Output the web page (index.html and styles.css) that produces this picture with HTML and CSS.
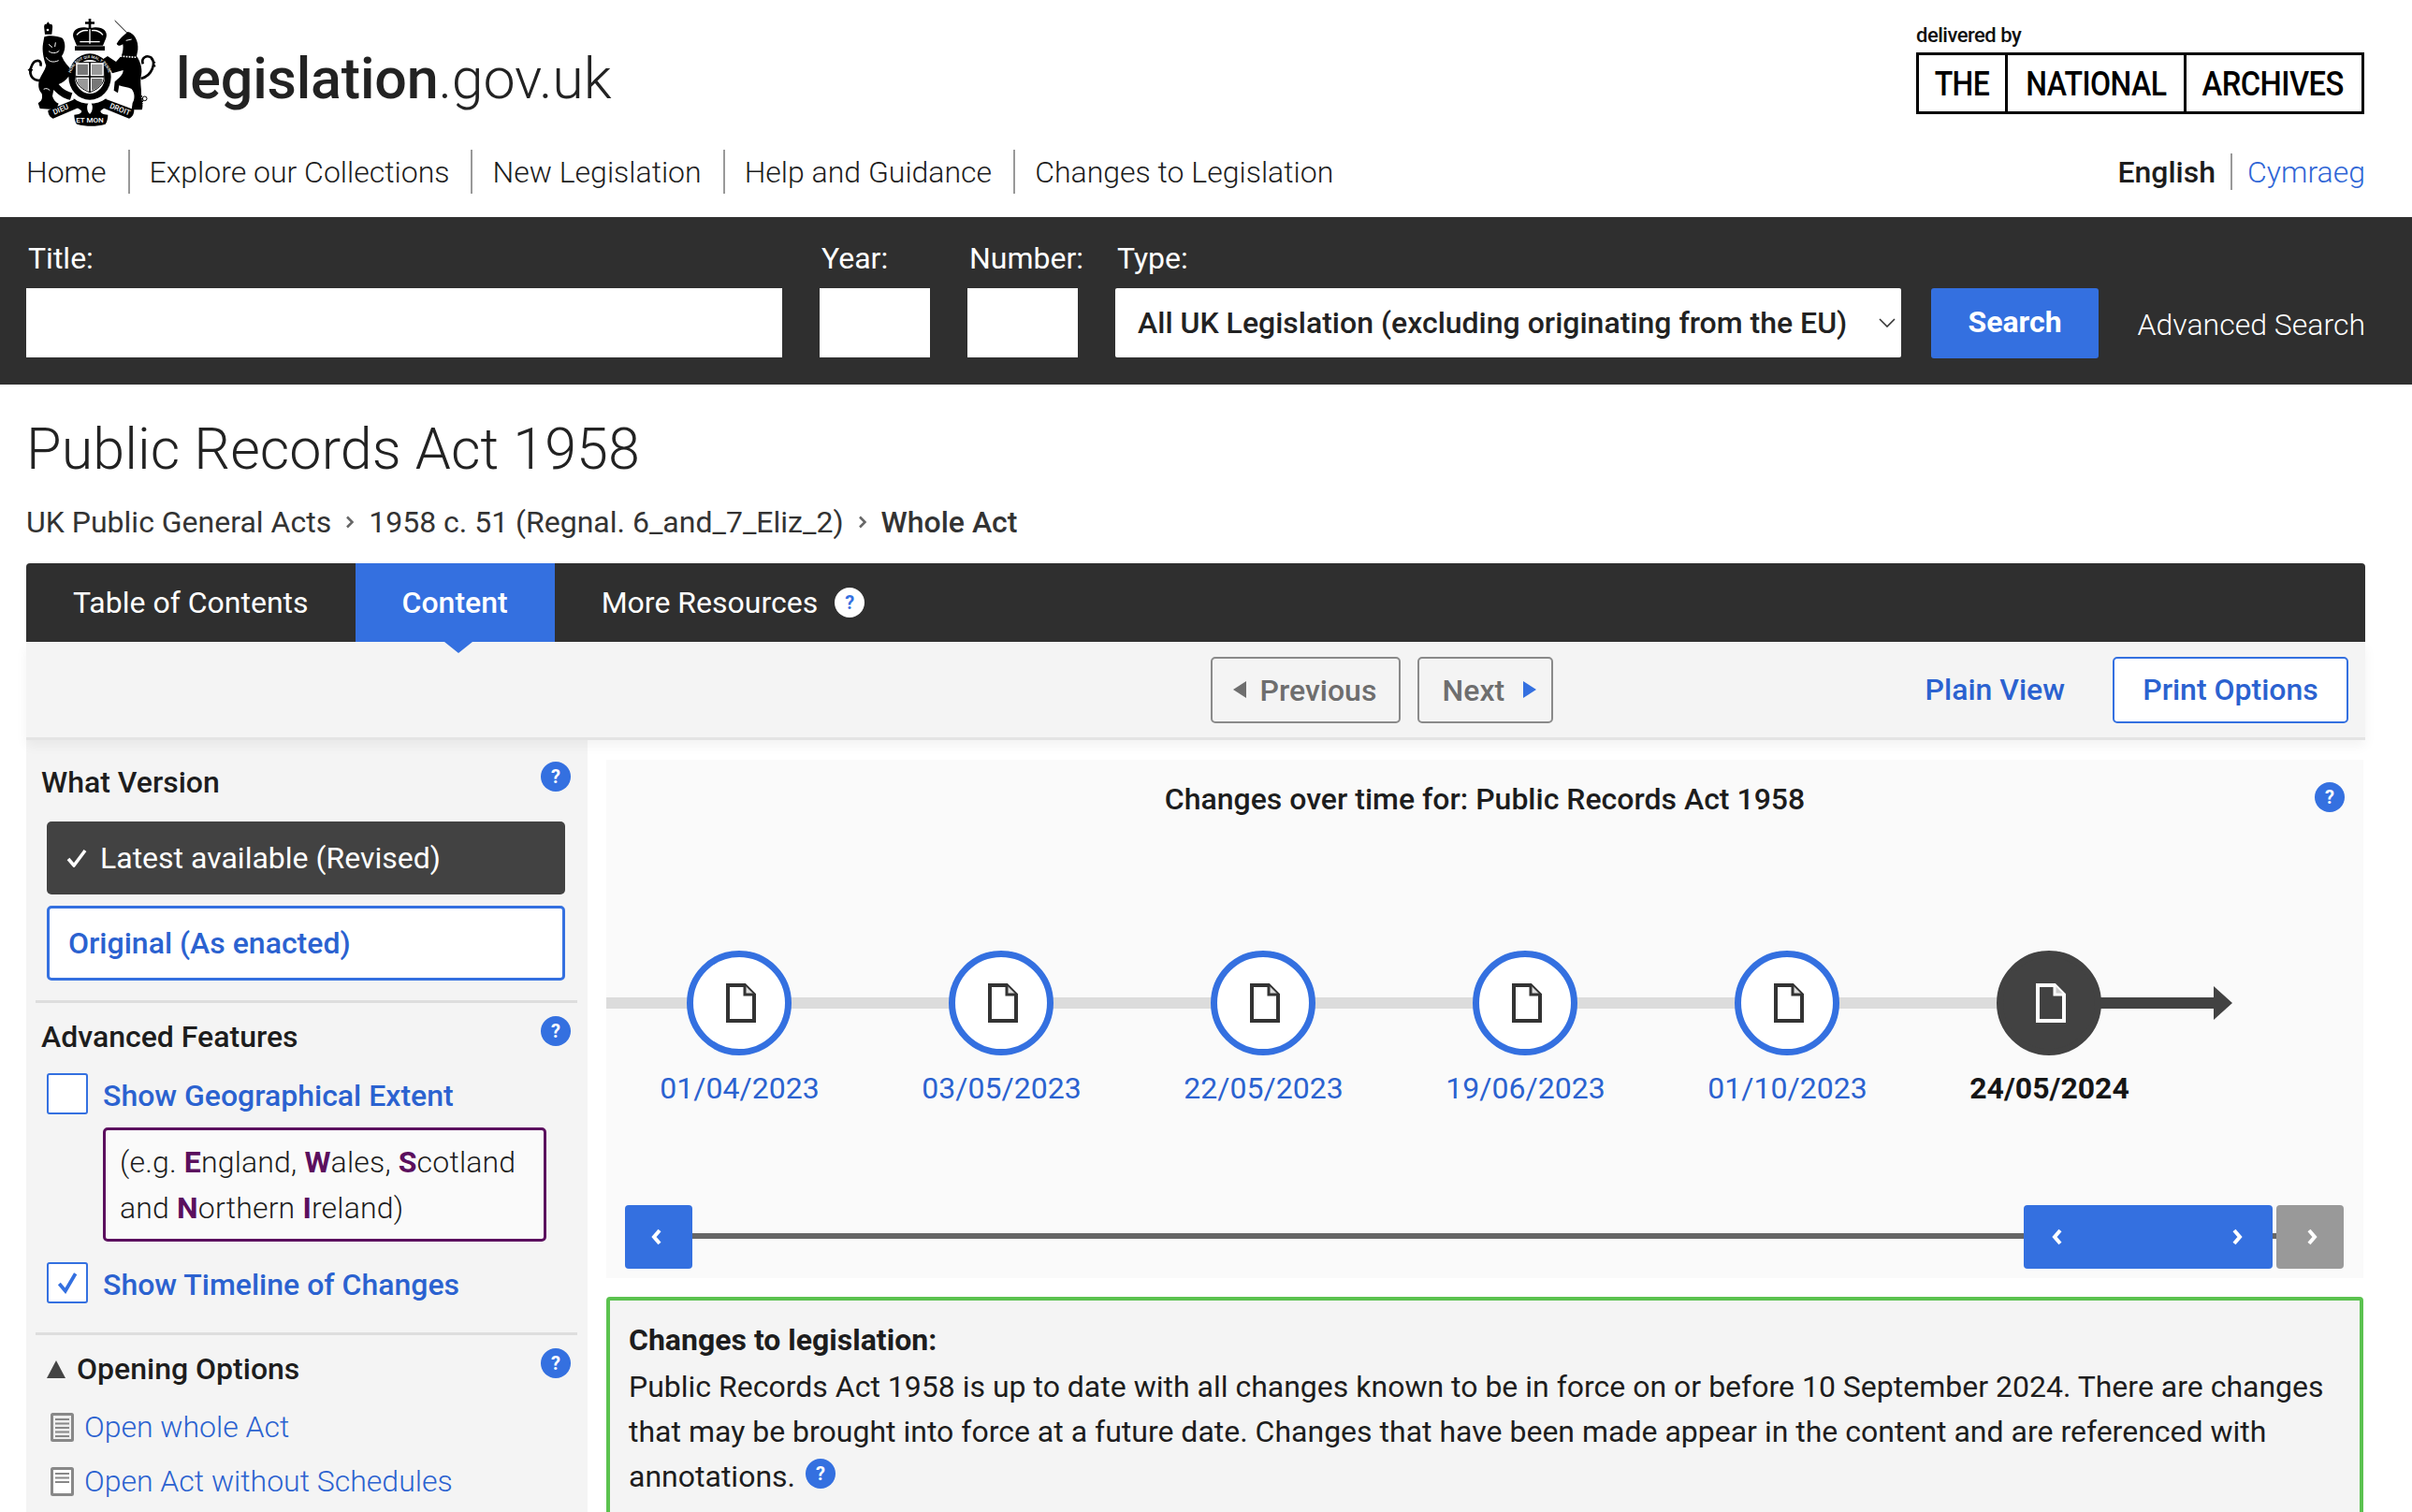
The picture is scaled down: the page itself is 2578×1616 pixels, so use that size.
FILE: index.html
```html
<!DOCTYPE html>
<html lang="en">
<head>
<meta charset="utf-8">
<title>Public Records Act 1958 - legislation.gov.uk</title>
<link rel="stylesheet" href="styles.css">
</head>
<body>
<header class="site-header">
  <div class="brand-row">
    <a class="brand" href="#">
      <svg class="crest" viewBox="0 0 480 390" aria-hidden="true">
        <defs>
          <path id="garter" d="M172 262C150 205 180 160 228 156C276 160 306 205 284 262"/>
        </defs>
        <g fill="#000">
          <path d="M224 30h8v10h11v7h-11v13h-8V47h-11v-7h11z"/>
          <path d="M176 92c-8-22 12-36 36-34 8 1 12 2 16 2s8-1 16-2c24-2 44 12 36 34l-10 24H186z"/>
          <path d="M180 118h96v14h-96z"/>
          <path d="M82 62c-2-12 2-16 6-14l6-8 6 8c6-2 10 2 8 14l-2 18H84z"/>
          <path d="M82 88c13-6 43-4 58 4 12 16 10 40-2 58 8 20 22 35 34 45l16-7 7 12-23 22-12-7c-10 13-20 21-32 25 8 10 22 22 44 28l-7 22c-20-2-40-18-53-32l-4 20c4 12 10 20 20 24l-8 20-52-4-6-18c10-4 16-14 12-30-8-8-14-22-8-44 6-16 18-30 22-46-8-20-14-50-10-70z"/>
          <path d="M350 72c20 4 35 28 32 58l-4 20c14 20 20 45 14 65-4 25 4 45 0 65 4 15 8 30 3 42h-33l3-22c7-10 9-30-3-45-12-7-27-5-40-11l-4 24-13-8 3-28c12-12 27-20 27-37l-35 10-15-25-15-20 15-10 27 18 18-20c4-13 6-23 4-36-8 6-16 6-20-2 8-14 21-26 36-38z"/>
          <path d="M176 286c30 22 74 22 104 0l6 24c-10 6-18 10-24 16 2 8 8 10 24 12 0 8-2 22-8 30-30 8-60 8-92 0-6-8-8-22-8-30 16-2 22-4 24-12-6-6-14-10-24-16z"/>
          <path d="M94 324l86-36 14 26-84 36c-10-4-16-14-16-26z"/>
          <path d="M280 288l90 34c0 14-6 24-16 28l-88-36z"/>
        </g>
        <g fill="none" stroke="#000">
          <path d="M72 228c-32 2-42-23-30-48 8-20 34-22 28 2" stroke-width="8"/>
          <path d="M42 186l-12 10M44 192l-8 14" stroke-width="4"/>
          <path d="M392 222c38-10 48-52 33-67-15-10-33 0-27 20" stroke-width="8"/>
          <path d="M424 160l14 12M430 170l8 14" stroke-width="4"/>
          <path d="M308 36l44 44" stroke-width="3"/>
          <path d="M362 252c24 8 36 26 34 50" stroke-width="6" stroke-dasharray="5 3"/>
          <circle cx="404" cy="286" r="7" stroke-width="3"/>
        </g>
        <g fill="none" stroke="#fff">
          <path d="M96 112l12 10M118 106l-2 14M96 134c10 8 26 8 34-2M88 154c8 14 22 18 40 10M80 256c8-4 14-2 20 4" stroke-width="3"/>
          <path d="M326 150l52 4" stroke-width="5" stroke-dasharray="5 4"/>
          <path d="M186 82c12-14 24-16 36-14M270 82c-12-14-24-16-36-14M228 64v46M196 104h64" stroke-width="4"/>
          <path d="M344 100l18-4" stroke-width="3"/>
        </g>
        <circle cx="93" cy="66" r="4" fill="#fff"/>
        <ellipse cx="228" cy="216" rx="68" ry="74" fill="#000"/>
        <ellipse cx="228" cy="216" rx="48" ry="54" fill="#fff"/>
        <path d="M182 170h92v46c0 26-24 42-46 50-22-8-46-24-46-50z" fill="#fff" stroke="#000" stroke-width="3"/>
        <path d="M228 170v96M182 216h92" stroke="#000" stroke-width="5"/>
        <g fill="#777">
          <path d="M188 176h34v34h-34zM234 222h34v6c0 14-14 26-34 32z"/>
          <path d="M234 176h34v34h-34zM188 222h34v38c-20-6-34-18-34-32z" opacity=".75"/>
        </g>
        <text class="crest-garter"><textPath href="#garter" startOffset="50%" text-anchor="middle">HONI SOIT QUI MAL Y PENSE</textPath></text>
        <path d="M228 296c12 8 10 28 2 38-1 2-3 2-4 0-8-10-10-30 2-38z" fill="#fff"/>
        <circle cx="203" cy="294" r="4" fill="#fff"/>
        <circle cx="253" cy="294" r="4" fill="#fff"/>
        <text class="crest-motto" x="138" y="328" transform="rotate(-23 138 328)" text-anchor="middle">DIEU</text>
        <text class="crest-motto" x="322" y="328" transform="rotate(21 322 328)" text-anchor="middle">DROIT</text>
        <text class="crest-motto" x="228" y="362" text-anchor="middle">ET MON</text>
      </svg>
      <span class="wordmark"><b>legislation</b>.gov.uk</span>
    </a>
    <div class="tna">
      <span class="tna-by">delivered by</span>
      <div class="tna-box"><span><em>THE</em></span><span><em>NATIONAL</em></span><span><em>ARCHIVES</em></span></div>
    </div>
  </div>
  <div class="nav-row">
    <nav class="nav">
      <a href="#">Home</a>
      <a href="#">Explore our Collections</a>
      <a href="#">New Legislation</a>
      <a href="#">Help and Guidance</a>
      <a href="#">Changes to Legislation</a>
    </nav>
    <div class="lang"><strong>English</strong><a href="#">Cymraeg</a></div>
  </div>
</header>

<form class="search">
  <label class="field field-title"><span>Title:</span><input type="text"></label>
  <label class="field field-num"><span>Year:</span><input type="text"></label>
  <label class="field field-num"><span>Number:</span><input type="text"></label>
  <label class="field field-type"><span>Type:</span>
    <span class="select-wrap">
      <select><option>All UK Legislation (excluding originating from the EU)</option></select>
      <svg class="select-chevron" viewBox="0 0 18 10"><path d="M1 1l8 8 8-8" fill="none" stroke="#333" stroke-width="1.6"/></svg>
    </span>
  </label>
  <button class="search-btn" type="button">Search</button>
  <a class="adv" href="#">Advanced Search</a>
</form>

<main class="page">
  <h1>Public Records Act 1958</h1>
  <div class="crumbs">
    <a href="#">UK Public General Acts</a>
    <svg class="crumb-sep" viewBox="0 0 10 14"><path d="M2 1.500l5.500 5.500-5.500 5.500" fill="none" stroke="#666" stroke-width="2.500"/></svg>
    <a href="#">1958 c. 51 (Regnal. 6_and_7_Eliz_2)</a>
    <svg class="crumb-sep" viewBox="0 0 10 14"><path d="M2 1.500l5.500 5.500-5.500 5.500" fill="none" stroke="#666" stroke-width="2.500"/></svg>
    <strong>Whole Act</strong>
  </div>

  <div class="tabs">
    <a class="tab" href="#">Table of Contents</a>
    <a class="tab tab-active" href="#">Content</a>
    <a class="tab tab-more" href="#">More Resources <i class="help help-white">?</i></a>
  </div>

  <div class="toolbar">
    <a class="pager pager-prev" href="#"><i class="tri tri-left"></i>Previous</a>
    <a class="pager pager-next" href="#">Next<i class="tri tri-right"></i></a>
    <a class="plain" href="#">Plain View</a>
    <a class="print" href="#">Print Options</a>
  </div>

  <div class="columns">
    <aside class="side">
      <section class="side-sec sec-version">
        <div class="side-head"><h2>What Version</h2><i class="help">?</i></div>
        <a class="ver ver-on" href="#"><svg class="tick" viewBox="0 0 22 20"><path d="M2 11l6 7L20 2" fill="none" stroke="#fff" stroke-width="3.500"/></svg>Latest available (Revised)</a>
        <a class="ver ver-off" href="#">Original (As enacted)</a>
      </section>
      <section class="side-sec sec-adv">
        <div class="side-head"><h2>Advanced Features</h2><i class="help">?</i></div>
        <a class="check-row" href="#"><span class="box"></span><span class="check-label">Show Geographical Extent</span></a>
        <p class="geo">(e.g. <b>E</b>ngland, <b>W</b>ales, <b>S</b>cotland and <b>N</b>orthern <b>I</b>reland)</p>
        <a class="check-row" href="#"><span class="box"><svg viewBox="0 0 24 24"><path d="M4 13l6 7L20 3" fill="none" stroke="#3470e0" stroke-width="3.500"/></svg></span><span class="check-label">Show Timeline of Changes</span></a>
      </section>
      <section class="side-sec sec-open">
        <div class="side-head"><h2 class="has-tri"><i class="tri-up"></i>Opening Options</h2><i class="help">?</i></div>
        <a class="open-link" href="#">
          <svg class="pdoc" viewBox="0 0 25 31"><rect x="1.500" y="1.500" width="22" height="28" rx="1" fill="#eee" stroke="#888" stroke-width="3"/><path d="M5 7h15M5 11.500h15M5 16h15M5 20.500h15M5 25h15" stroke="#888" stroke-width="2.200"/></svg>
          Open whole Act</a>
        <a class="open-link" href="#">
          <svg class="pdoc" viewBox="0 0 25 31"><rect x="1.500" y="1.500" width="22" height="28" rx="1" fill="#fff" stroke="#888" stroke-width="3"/><path d="M5 7h15M5 11.500h15M5 16h15" stroke="#888" stroke-width="2.200"/></svg>
          Open Act without Schedules</a>
      </section>
    </aside>

    <div class="content">
      <section class="timeline">
        <div class="tl-head"><h2>Changes over time for: Public Records Act 1958</h2><i class="help">?</i></div>
        <div class="tl-stage">
          <span class="tl-line"></span>
          <span class="tl-arrow"></span>
          <a class="node" href="#"><span class="dot"><svg class="doc" viewBox="0 0 32 42"><path d="M2 2h18l10 10v28H2z" fill="#fff" stroke="#333" stroke-width="4"/><path d="M20 2v10h10" fill="#ddd" stroke="#333" stroke-width="3"/></svg></span><span class="date">01/04/2023</span></a>
          <a class="node" href="#"><span class="dot"><svg class="doc" viewBox="0 0 32 42"><path d="M2 2h18l10 10v28H2z" fill="#fff" stroke="#333" stroke-width="4"/><path d="M20 2v10h10" fill="#ddd" stroke="#333" stroke-width="3"/></svg></span><span class="date">03/05/2023</span></a>
          <a class="node" href="#"><span class="dot"><svg class="doc" viewBox="0 0 32 42"><path d="M2 2h18l10 10v28H2z" fill="#fff" stroke="#333" stroke-width="4"/><path d="M20 2v10h10" fill="#ddd" stroke="#333" stroke-width="3"/></svg></span><span class="date">22/05/2023</span></a>
          <a class="node" href="#"><span class="dot"><svg class="doc" viewBox="0 0 32 42"><path d="M2 2h18l10 10v28H2z" fill="#fff" stroke="#333" stroke-width="4"/><path d="M20 2v10h10" fill="#ddd" stroke="#333" stroke-width="3"/></svg></span><span class="date">19/06/2023</span></a>
          <a class="node" href="#"><span class="dot"><svg class="doc" viewBox="0 0 32 42"><path d="M2 2h18l10 10v28H2z" fill="#fff" stroke="#333" stroke-width="4"/><path d="M20 2v10h10" fill="#ddd" stroke="#333" stroke-width="3"/></svg></span><span class="date">01/10/2023</span></a>
          <a class="node node-on" href="#"><span class="dot"><svg class="doc" viewBox="0 0 32 42"><path d="M2 2h18l10 10v28H2z" fill="#424242" stroke="#fff" stroke-width="4"/><path d="M20 2v10h10" fill="#ccc" stroke="#fff" stroke-width="3"/></svg></span><span class="date">24/05/2024</span></a>
        </div>
        <div class="slider">
          <a class="sl-btn sl-left" href="#"><svg class="chev" viewBox="0 0 12 18"><path d="M9 2L3 9l6 7" /></svg></a>
          <a class="sl-btn sl-range" href="#"><svg class="chev" viewBox="0 0 12 18"><path d="M9 2L3 9l6 7"/></svg><svg class="chev" viewBox="0 0 12 18"><path d="M3 2l6 7-6 7"/></svg></a>
          <a class="sl-btn sl-right" href="#"><svg class="chev" viewBox="0 0 12 18"><path d="M3 2l6 7-6 7"/></svg></a>
        </div>
      </section>
      <section class="notice">
        <h3>Changes to legislation:</h3>
        <p>Public Records Act 1958 is up to date with all changes known to be in force on or before 10 September 2024. There are changes that may be brought into force at a future date. Changes that have been made appear in the content and are referenced with annotations. <i class="help help-inline">?</i></p>
      </section>
    </div>
  </div>
</main>
</body>
</html>
```
FILE: styles.css
```css
* { box-sizing: border-box; }
html, body { margin: 0; height: 1616px; overflow: hidden; }
body { background: #fff; color: #1d1d1d; font-family: Roboto, "Noto Sans", sans-serif; font-size: 32px; font-weight: 300; }
a { color: inherit; text-decoration: none; }
h1, h2, h3, p { margin: 0; }
i, em { font-style: normal; }

.site-header { height: 232px; padding: 0 50px 0 28px; }
.brand-row { height: 160px; display: flex; justify-content: space-between; }
.brand { display: flex; align-items: flex-start; gap: 8px; padding-top: 10px; margin-left: -8px; }
.crest { width: 160px; height: 130px; display: block; flex: none; }
.crest-motto { font-family: Roboto, sans-serif; font-size: 24px; font-weight: 500; fill: #fff; }
.crest-garter { font-family: Roboto, sans-serif; font-size: 12.500px; font-weight: 500; fill: #fff; }
.wordmark { font-size: 61px; line-height: 80px; font-weight: 300; letter-spacing: -.2px; color: #222; margin-top: 34px; }
.wordmark b { font-weight: 500; }

.tna { width: 480px; padding: 24px 1px 0 0; display: flex; flex-direction: column; }
.tna-by { font-size: 22px; line-height: 28px; height: 32px; font-weight: 500; letter-spacing: -.5px; color: #111; }
.tna-box { display: flex; height: 66px; border: 3px solid #000; }
.tna-box span { display: flex; align-items: center; justify-content: center; border-left: 3px solid #000; padding-top: 2px; overflow: hidden; }
.tna-box em { font-size: 36px; font-weight: 500; color: #000; letter-spacing: -.6px; transform: scaleX(.89); display: block; white-space: nowrap; }
.tna-box span:nth-child(1) { width: 92px; border-left: 0; }
.tna-box span:nth-child(2) { width: 191px; }
.tna-box span:nth-child(3) { flex: 1; padding-right: 3px; }
.tna-box span:nth-child(3) em { transform: scaleX(.91); }

.nav-row { display: flex; justify-content: space-between; }
.nav { display: flex; }
.nav a { height: 47px; line-height: 48px; padding: 0 23px 0 21px; border-left: 2px solid #999; white-space: nowrap; }
.nav a:first-child { padding-left: 0; border-left: 0; }
.lang { display: flex; }
.lang strong { font-weight: 500; line-height: 48px; padding-right: 16px; }
.lang a { line-height: 41px; height: 39px; padding-left: 16px; border-left: 2px solid #999; color: #2f66d6; margin-top: 4px; }

.search { height: 179px; background: #2f2f2f; color: #fff; display: flex; padding: 0 50px 0 28px; align-items: flex-start; }
.field { display: flex; flex-direction: column; margin-right: 40px; }
.field > span:first-child { height: 76px; padding: 24px 0 0 2px; line-height: 40px; font-weight: 400; }
.field input { height: 74px; border: 0; display: block; width: 100%; background: #fff; }
.field-title { width: 808px; }
.field-num { width: 118px; }
.field-type { width: 840px; margin-right: 32px; }
.select-wrap { position: relative; display: block; }
.select-wrap select { appearance: none; -webkit-appearance: none; width: 100%; height: 74px; border: 0; border-radius: 2px; background: #fff; color: #222; font: 500 32px Roboto, sans-serif; padding: 0 0 0 24px; }
.select-chevron { position: absolute; right: 6px; top: 32px; width: 18px; height: 10px; }
.search-btn { margin-top: 76px; width: 179px; height: 75px; padding-bottom: 5px; background: #3470e0; color: #fff; border: 0; border-radius: 3px; font: 700 32px Roboto, sans-serif; }
.adv { margin: 76px 0 0 auto; line-height: 78px; font-weight: 300; white-space: nowrap; }

.page { padding: 0 50px 0 28px; }
h1 { font-size: 61px; line-height: 80px; font-weight: 300; padding-top: 29px; height: 123px; letter-spacing: .1px; color: #222; }
.crumbs { height: 68px; display: flex; align-items: center; gap: 15px; font-weight: 400; color: #333; padding-bottom: 20px; }
.crumbs strong { font-weight: 500; }
.crumb-sep { width: 10px; height: 14px; }

.tabs { display: flex; height: 84px; background: #2f2f2f; color: #fff; border-radius: 4px 4px 0 0; position: relative; z-index: 1; }
.tab { display: flex; align-items: center; padding: 0 50px; font-weight: 400; gap: 18px; }
.tab-active { background: #3470e0; font-weight: 500; position: relative; }
.tab-active::after { content: ""; position: absolute; left: 95px; bottom: -12px; border: solid transparent; border-width: 12px 15px 0; border-top-color: #3470e0; }
.tab-more { padding-right: 0; }

.toolbar { height: 105px; background: #f4f4f4; border-bottom: 3px solid #e4e4e4; box-shadow: 0 6px 12px rgba(0,0,0,.05); padding: 16px 18px 0 0; display: flex; align-items: flex-start; font-weight: 500; position: relative; }
.pager { height: 71px; display: flex; align-items: center; border: 2px solid #8a8a8a; border-radius: 5px; color: #6e6e6e; }
.pager-prev { margin-left: auto; width: 203px; padding-left: 22px; gap: 15px; }
.pager-next { margin-left: 18px; width: 145px; padding-left: 25px; gap: 20px; }
.tri { display: block; width: 0; height: 0; border: solid transparent; border-width: 9px 0; margin-top: -2px; }
.tri-left { border-right: 14px solid #6e6e6e; }
.tri-right { border-left: 14px solid #3470e0; }
.plain { margin-left: 398px; height: 71px; line-height: 71px; color: #2b62d0; }
.print { margin-left: 51px; width: 252px; height: 71px; line-height: 66px; text-align: center; background: #fff; border: 2px solid #3470e0; border-radius: 5px; color: #2b62d0; }

.columns { display: grid; grid-template-columns: 600px 1fr; column-gap: 20px; }
.side { background: #f4f4f4; height: 900px; padding: 0 11px 0 10px; }
.side-sec { border-bottom: 3px solid #ddd; }
.sec-open { border-bottom: 0; }
.sec-version { height: 281px; padding-top: 23px; }
.sec-adv { height: 355px; padding-top: 14px; }
.sec-open { padding-top: 14px; }
.side-head { display: flex; justify-content: space-between; align-items: flex-start; padding: 0 7px 0 6px; height: 64px; }
.sec-adv .side-head { height: 61px; }
.sec-open .side-head { height: 55px; }
.side-head h2 { font-size: 32px; line-height: 44px; font-weight: 500; color: #1d1d1d; }
.help { display: inline-flex; align-items: center; justify-content: center; width: 32px; height: 32px; border-radius: 50%; background: #3470e0; color: #fff; font-size: 20px; font-weight: 700; flex: none; }
.help-white { background: #fff; color: #3470e0; }
.help-inline { vertical-align: 7px; margin-left: 3px; }

.ver { display: flex; align-items: center; margin-left: 12px; width: 554px; border-radius: 5px; font-weight: 400; }
.ver-on { height: 78px; background: #424242; color: #fff; padding-left: 21px; }
.tick { width: 22px; height: 20px; margin-right: 14px; flex: none; }
.ver-off { height: 80px; margin-top: 12px; background: #fff; border: 3px solid #3470e0; color: #2b62d0; font-weight: 500; padding-left: 20px; }

.check-row { display: flex; align-items: center; gap: 16px; margin-left: 12px; height: 44px; color: #2b62d0; font-weight: 500; white-space: nowrap; }
.check-label { padding-top: 4px; }
.box { width: 44px; height: 44px; flex: none; background: #fff; border: 2px solid #3470e0; border-radius: 3px; display: block; padding: 7px; }
.box svg { display: block; width: 100%; height: 100%; }
.geo { margin: 14px 0 22px 72px; width: 474px; height: 122px; border: 3px solid #5b0f5e; border-radius: 5px; background: #fafafa; padding: 10px 0 0 15px; line-height: 49px; letter-spacing: .18px; }
.geo b { color: #5b0f5e; font-weight: 700; }

.has-tri { display: flex; align-items: center; gap: 12px; padding-left: 6px; }
.tri-up { width: 0; height: 0; border: solid transparent; border-width: 0 10px 19px; border-bottom-color: #444; }
.open-link { display: flex; align-items: center; gap: 11px; height: 58px; padding-left: 16px; color: #2b62d0; font-weight: 300; }
.pdoc { width: 25px; height: 31px; flex: none; }

.content { padding: 21px 2px 0 0; }
.timeline { height: 554px; background: #fafafa; display: flex; flex-direction: column; }
.tl-head { height: 204px; padding: 20px 0 0; display: flex; position: relative; justify-content: center; }
.tl-head h2 { font-size: 32px; line-height: 44px; font-weight: 500; }
.tl-head .help { position: absolute; right: 20px; top: 24px; }
.tl-stage { display: flex; height: 272px; padding-left: 2px; position: relative; }
.tl-line { position: absolute; left: 0; top: 50px; width: 1500px; height: 12px; background: #dcdcdc; }
.tl-arrow { position: absolute; left: 1590px; top: 50px; width: 130px; height: 12px; background: #424242; }
.tl-arrow::after { content: ""; position: absolute; left: 128px; top: -12px; border: solid transparent; border-width: 18px 0 18px 20px; border-left-color: #424242; }
.node { width: 280px; display: flex; flex-direction: column; align-items: center; position: relative; }
.dot { width: 112px; height: 112px; border-radius: 50%; background: #fff; border: 7px solid #3470e0; display: flex; align-items: center; justify-content: center; flex: none; padding-left: 3px; }
.doc { width: 32px; height: 42px; }
.date { margin-top: 13px; line-height: 44px; color: #2b62d0; font-weight: 400; padding-left: 1px; }
.node-on .dot { background: #424242; border-color: #424242; }
.node-on .date { color: #161616; font-weight: 700; }

.slider { display: flex; gap: 4px; padding: 0 21px 0 20px; height: 68px; position: relative; }
.slider::before { content: ""; position: absolute; left: 92px; right: 21px; top: 30px; height: 6px; background: #666; }
.sl-btn { position: relative; display: flex; align-items: center; justify-content: space-between; border-radius: 4px; background: #3470e0; height: 68px; }
.sl-left { width: 72px; padding-left: 28px; }
.sl-range { width: 266px; margin-left: auto; padding: 0 32px 0 30px; }
.sl-right { width: 72px; background: #999; padding-left: 32px; }
.chev { width: 12px; height: 18px; }
.chev path { fill: none; stroke: #fff; stroke-width: 4; }

.notice { margin-top: 20px; height: 400px; border: 4px solid #5bc24f; border-radius: 4px; background: #f4f4f4; padding: 16px 20px 0 20px; font-weight: 400; line-height: 48px; }
.notice h3 { font-size: 32px; font-weight: 700; line-height: 48px; margin: 2px 0 2px; }
```
